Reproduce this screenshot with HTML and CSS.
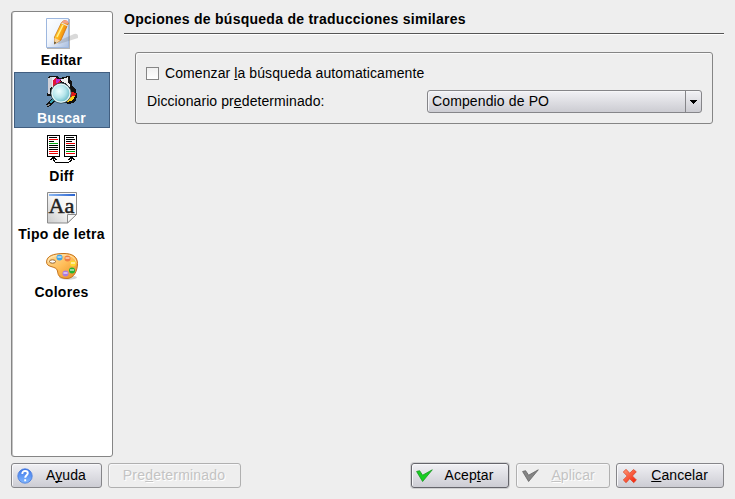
FILE: index.html
```html
<!DOCTYPE html>
<html lang="es">
<head>
<meta charset="utf-8">
<title>Opciones</title>
<link rel="stylesheet" href="styles.css">
</head>
<body>
<div class="dialog">
  <div class="main">
    <nav class="sidebar">
      <div class="item">
        <svg width="32" height="32" viewBox="0 0 32 32">
          <defs>
            <linearGradient id="page" x1="0" y1="0" x2="1" y2="1"><stop offset="0" stop-color="#fff"/><stop offset=".45" stop-color="#f0f5fd"/><stop offset="1" stop-color="#a9bedf"/></linearGradient>
            <linearGradient id="pencil" x1="0" y1="0" x2="1" y2=".5"><stop offset="0" stop-color="#ffe34d"/><stop offset=".5" stop-color="#ffb41c"/><stop offset="1" stop-color="#e56d00"/></linearGradient>
          </defs>
          <path d="M1 1h23v30H1z" fill="#b5b5b5"/>
          <path d="M.5.5h22v29H.5z" fill="url(#page)" stroke="#9db7df"/>
          <path d="M10 24l18-8q5-1 4 4L13 26z" fill="#777" opacity=".28"/>
          <path d="M8.500 19L15.500 4.500Q19 .5 22.500 5L15 22 8.500 26z" fill="url(#pencil)" stroke="#c56a0a" stroke-width=".7"/>
          <path d="M15.500 4.500Q18 1 21.500 3L22.500 6z" fill="#f3a08a"/>
          <path d="M15.500 5l6.500 3" stroke="#e4e4e4" stroke-width="1.300"/>
          <path d="M11 19l6-12" stroke="#fff08a" stroke-width="1.500"/>
          <path d="M8.500 20l5.500 2.500-5.500 3.700z" fill="#f4d3a1"/>
          <path d="M8.300 23.500l2 1.200-2 1.600z" fill="#443"/>
        </svg>
        <span>Editar</span>
      </div>
      <div class="item selected">
        <svg width="32" height="32" viewBox="0 0 32 32">
          <defs><radialGradient id="lens" cx=".4" cy=".4" r=".65"><stop offset="0" stop-color="#f0ffff"/><stop offset=".5" stop-color="#b6e6ec"/><stop offset="1" stop-color="#56aebd"/></radialGradient></defs>
          <g shape-rendering="crispEdges">
            <path d="M2 1l2-1h7l3 2 4-1 3-1h3v4l2 1v5l4 3 1 8-2 5-5 2-6-1L4 20H1v-3h1z" fill="#111"/>
            <path d="M2 2l3-1h1v9l-2 3v5H2z" fill="#d0d0d8"/>
            <path d="M6 1h4l1 2-1 5-4 5z" fill="#e9e9f0"/>
            <path d="M7 4l3-2 5 3-2 3-6 3z" fill="#e31436"/>
            <path d="M10 3h5l-2 3-3 1z" fill="#c32acc"/>
            <path d="M14 4l5-2 3-1v6l2 1v4l-5-5z" fill="#eee"/>
            <path d="M25 16l5 1-1 4-5 1z" fill="#de1717"/>
            <path d="M23 21l6-1-2 4-6 2z" fill="#ffcf16"/>
            <path d="M9 23l-8 7" stroke="#111" stroke-width="4"/>
            <path d="M8 23l-4 4" stroke="#329eae" stroke-width="2"/>
            <path d="M4 28l-3 2" stroke="#888"/>
          </g>
          <circle cx="15" cy="17.200" r="10" fill="url(#lens)" stroke="#3c5058"/>
          <circle cx="15" cy="17.200" r="9" fill="none" stroke="#e7f4f5" stroke-width="1.200"/>
        </svg>
        <span>Buscar</span>
      </div>
      <div class="item">
        <svg width="32" height="32" viewBox="0 0 32 32" shape-rendering="crispEdges">
          <path d="M1.500 1.500h12v21h-12zM18.500 1.500h12v21h-12z" fill="#fff" stroke="#000"/>
          <path d="M3 3.500h8M3 7.500h5M3 11.500h9M3 13.500h9M3 15.500h9M20 3.500h8M20 5.500h9M20 7.500h6M20 11.500h9M20 13.500h9M20 15.500h9" stroke="#000"/>
          <path d="M3 5.500h9M3 17.500h9M3 19.500h9M20 9.500h9M20 19.500h9" stroke="#e00"/>
          <path d="M3 9.500h9M20 17.500h9" stroke="#00a811"/>
          <path d="M6 23.500h3M24 23.500h3M5 24.500h5M23 24.500h5M4 25.500h2M7 25.500h1M9 25.500h2M22 25.500h2M25 25.500h1M27 25.500h2M7 26.500h2M24 26.500h2M8 27.500h1M23 27.500h2M9 28.500h14" stroke="#000"/>
        </svg>
        <span>Diff</span>
      </div>
      <div class="item">
        <svg width="32" height="32" viewBox="0 0 32 32">
          <defs>
            <linearGradient id="sheet" x1="1" y1="0" x2="0" y2="1"><stop offset="0" stop-color="#fff"/><stop offset=".5" stop-color="#f5f5f5"/><stop offset="1" stop-color="#cacaca"/></linearGradient>
            <linearGradient id="bar"><stop stop-color="#8bb7f1"/><stop offset="1" stop-color="#2862cf"/></linearGradient>
          </defs>
          <path d="M1.500.5h29v21.500l-9 9h-20z" fill="url(#sheet)" stroke="#8b8b8b"/>
          <path d="M3 2h26v2H3z" fill="url(#bar)"/>
          <text x="2.500" y="21" class="serif" font-size="22" textLength="26" lengthAdjust="spacingAndGlyphs">Aa</text>
          <path d="M21.500 31V22.500h9z" fill="#f8f8f8" stroke="#8b8b8b"/>
        </svg>
        <span>Tipo de letra</span>
      </div>
      <div class="item">
        <svg width="32" height="32" viewBox="0 0 32 32">
          <defs><linearGradient id="wood" x1="0" y1="0" x2="1" y2="1"><stop offset="0" stop-color="#ffe2a5"/><stop offset=".5" stop-color="#ffbd58"/><stop offset="1" stop-color="#e58a20"/></linearGradient></defs>
          <ellipse cx="22" cy="27.500" rx="9" ry="2.200" fill="#aaa" opacity=".5"/>
          <path d="M.6 12C.6 6 7 3.500 18 3.500c8 0 13.500 3 13.500 10S28 28.500 21 28.500c-9 0-9-4.500-9.500-7.500S8 17.500 5 16.500.6 14.500.6 12z" fill="url(#wood)" stroke="#c5721a"/>
          <path d="M2 12C2 7 9 5 18 5c7 0 12 3 12 8" fill="none" stroke="#fff1cf" opacity=".7"/>
          <ellipse cx="6.500" cy="11.500" rx="3" ry="1.700" fill="#fff" stroke="#96632d"/>
          <circle cx="13.500" cy="7.500" r="3" fill="#3fa5e9"/><circle cx="21.500" cy="8.500" r="3" fill="#ee7e41"/>
          <circle cx="27" cy="13.500" r="3" fill="#ffd72e"/><circle cx="26" cy="20.500" r="3" fill="#23b534"/><circle cx="19.500" cy="23.500" r="3" fill="#ac7be0"/>
          <path d="M11.500 7h4M19.500 8h4M25 13h4M24 20h4M17.500 23h4" stroke="#fff" stroke-width="2" opacity=".5"/>
        </svg>
        <span>Colores</span>
      </div>
    </nav>
    <section class="content">
      <h1>Opciones de búsqueda de traducciones similares</h1>
      <div class="group">
        <label class="check"><i class="box"></i><span>Comenzar <u>l</u>a búsqueda automaticamente</span></label>
        <div class="row">
          <span>Diccionario pr<u>e</u>determinado:</span>
          <div class="combo"><span class="value">Compendio de PO</span><span class="arrow"><svg width="7" height="4" viewBox="0 0 7 4" shape-rendering="crispEdges"><path d="M0 0h7v1H0zM1 1h5v1H1zM2 2h3v1H2zM3 3h1v1H3z"/></svg></span></div>
        </div>
      </div>
    </section>
  </div>
  <footer class="buttons">
    <div class="btn help">
      <svg width="16" height="16" viewBox="0 0 16 16"><defs><linearGradient id="ball" x1="0" y1="0" x2="0" y2="1"><stop stop-color="#3d75e8"/><stop offset="1" stop-color="#82b8ff"/></linearGradient></defs><circle cx="8" cy="8" r="7.200" fill="url(#ball)" stroke="#4478dc" stroke-width=".8"/><path d="M5.300 6C5.300 3.700 6.600 3 8.100 3s2.700.9 2.700 2.300C10.800 7.200 8.200 7.400 8.200 9.700M8.200 11.200v2" fill="none" stroke="#fff" stroke-width="1.900"/></svg>
      <span>A<u>y</u>uda</span>
    </div>
    <div class="btn defaults off"><span>Pre<u>d</u>eterminado</span></div>
    <div class="btn accept">
      <svg width="17" height="14" viewBox="0 0 17 14"><path d="M.6 2.500l3-.8 3 4.500L16.300.8 6.600 12.500z" fill="#18cf22" stroke="#16971f" stroke-width=".8"/></svg>
      <span>Acep<u>t</u>ar</span>
    </div>
    <div class="btn apply off">
      <svg width="17" height="14" viewBox="0 0 17 14"><path d="M.6 2.500l3-.8 3 4.500L16.300.8 6.600 12.500z" fill="#858585" stroke="#636363" stroke-width=".8"/></svg>
      <span><u>A</u>plicar</span>
    </div>
    <div class="btn cancel">
      <svg width="16" height="16" viewBox="0 0 16 16"><defs><linearGradient id="cross" x1="0" y1="0" x2="1" y2="1"><stop stop-color="#ff9b77"/><stop offset="1" stop-color="#f21905"/></linearGradient></defs><path d="M1.300 4L4 1.300l3.700 3.900L11.500 1.500l2.800 2.300-3.900 4.200 4 4-2.700 2.700-4-4-3.600 4-2.800-2.700 3.900-4z" fill="url(#cross)" stroke="#dc4a2b" stroke-width=".8"/></svg>
      <span><u>C</u>ancelar</span>
    </div>
  </footer>
</div>
</body>
</html>
```
FILE: styles.css
```css
* { box-sizing: border-box; }
body { margin: 0; background: #eee; color: #000; font: 14px/18px "Liberation Sans", Arial, sans-serif; letter-spacing: .09px; }
svg { display: block; flex: none; }
span { white-space: nowrap; }
u { text-underline-offset: 1px; text-decoration-thickness: 1px; text-decoration-skip-ink: none; }
.dialog { width: 735px; height: 499px; padding: 11px; display: flex; flex-direction: column; gap: 6px; overflow: hidden; }
.main { display: flex; gap: 11px; height: 446px; }
.sidebar { width: 102px; padding: 2px; background: #fff; border: 1px solid #858585; border-radius: 3px; display: flex; flex-direction: column; gap: 2px; box-shadow: inset 1px 0 #c5c5c5; }
.item { height: 56px; display: flex; flex-direction: column; align-items: center; padding-top: 4px; font-weight: bold; letter-spacing: .28px; }
.item span { margin-top: 1px; margin-right: 1px; }
.item.selected { background: #678db2; box-shadow: inset 0 0 0 1px #415e80; color: #fff; }
.serif { font-family: "Liberation Serif", serif; font-weight: normal; letter-spacing: 0; fill: #222; stroke: #222; stroke-width: .5px; }
.content { flex: 1; }
h1 { margin: 0; height: 23px; font-size: 14px; line-height: 16px; border-bottom: 1px solid #555; box-shadow: 0 1px #fff; letter-spacing: .26px; }
.group { margin: 18px 11px 0; height: 72px; border: 1px solid #858585; border-radius: 3px; padding: 11px 10px 0; box-shadow: inset 1px 1px #fafafa; }
.check { display: flex; align-items: center; gap: 6px; height: 19px; }
.check span { margin-bottom: 2px; }
.box { width: 13px; height: 13px; border: 1px solid #858585; background: linear-gradient(#f0f0f0, #fff); }
.row { display: flex; justify-content: space-between; margin: 7px 0 0 1px; height: 23px; line-height: 23px; }
.combo { width: 275px; height: 23px; border: 1px solid #858589; border-radius: 3px; background: linear-gradient(#f1f1f5, #ccccd2); display: flex; line-height: 21px; box-shadow: inset 1px 1px #f6f6f8; }
.value { flex: 1; padding-left: 4px; letter-spacing: .13px; }
.arrow { width: 16px; border-left: 1px solid #858589; display: flex; align-items: center; justify-content: center; }
.buttons { display: flex; height: 25px; }
.btn { height: 25px; border: 1px solid #858589; border-radius: 3px; background: linear-gradient(#f0f0f4, #cdcdd4); box-shadow: inset 1px 1px #f8f8fa; display: flex; align-items: center; line-height: 23px; }
.btn.off { background: #eee; border-color: #b0b0b0; color: #c3c3c3; text-shadow: 1px 1px #fff; }
.help { width: 91px; padding-left: 5px; gap: 13px; }
.defaults { width: 133px; margin-left: 6px; padding-left: 14px; letter-spacing: .2px; }
.accept { width: 99px; margin-left: 170px; padding-left: 4px; gap: 12px; border-color: #65656b; box-shadow: inset 1px 1px #f8f8fa, 0 0 0 1px #d0d0d2; }
.apply { width: 94px; margin-left: 7px; padding-left: 5px; gap: 12px; }
.cancel { width: 108px; margin-left: 6px; padding-left: 5px; gap: 13px; }
```
